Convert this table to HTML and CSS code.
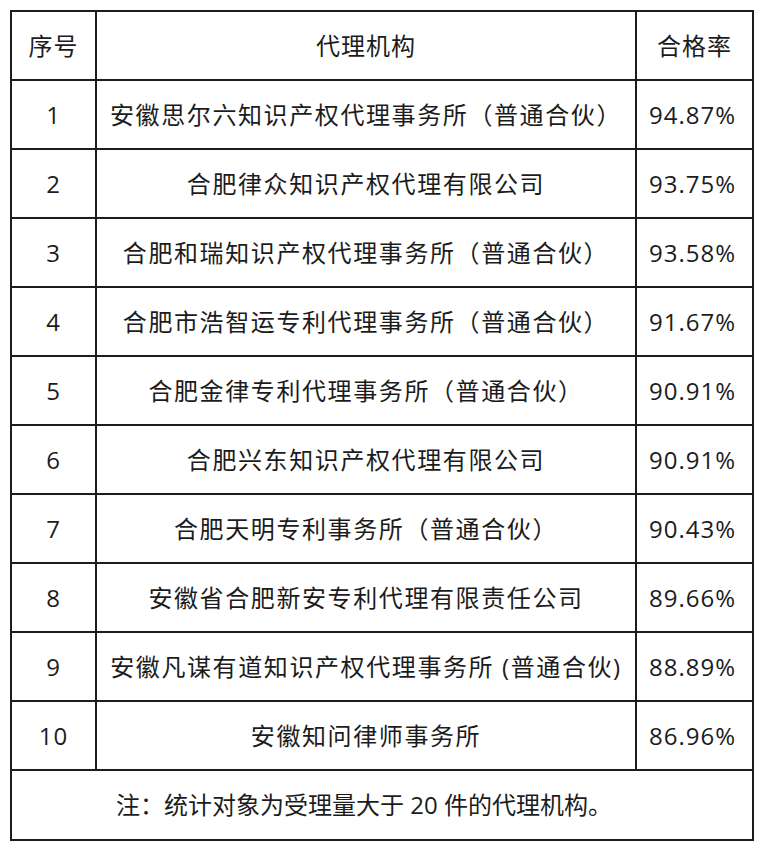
FILE: index.html
```html
<!DOCTYPE html>
<html lang="zh-CN">
<head>
<meta charset="utf-8">
<link rel="stylesheet" href="styles.css">
</head>
<body>
<table class="rank">
  <colgroup>
    <col class="c-no">
    <col class="c-name">
    <col class="c-rate">
  </colgroup>
  <thead>
    <tr><th>序号</th><th>代理机构</th><th>合格率</th></tr>
  </thead>
  <tbody>
    <tr><td>1</td><td class="name">安徽思尔六知识产权代理事务所（普通合伙）</td><td class="rate">94.87%</td></tr>
    <tr><td>2</td><td class="name">合肥律众知识产权代理有限公司</td><td class="rate">93.75%</td></tr>
    <tr><td>3</td><td class="name">合肥和瑞知识产权代理事务所（普通合伙）</td><td class="rate">93.58%</td></tr>
    <tr><td>4</td><td class="name">合肥市浩智运专利代理事务所（普通合伙）</td><td class="rate">91.67%</td></tr>
    <tr><td>5</td><td class="name">合肥金律专利代理事务所（普通合伙）</td><td class="rate">90.91%</td></tr>
    <tr><td>6</td><td class="name">合肥兴东知识产权代理有限公司</td><td class="rate">90.91%</td></tr>
    <tr><td>7</td><td class="name">合肥天明专利事务所（普通合伙）</td><td class="rate">90.43%</td></tr>
    <tr><td>8</td><td class="name">安徽省合肥新安专利代理有限责任公司</td><td class="rate">89.66%</td></tr>
    <tr><td>9</td><td class="name">安徽凡谋有道知识产权代理事务所 (普通合伙)</td><td class="rate">88.89%</td></tr>
    <tr><td>10</td><td class="name">安徽知问律师事务所</td><td class="rate">86.96%</td></tr>
  </tbody>
  <tfoot>
    <tr><td colspan="3" class="note">注：统计对象为受理量大于 20 件的代理机构。</td></tr>
  </tfoot>
</table>
</body>
</html>
```
FILE: styles.css
```css
html, body {
  margin: 0;
  padding: 0;
  background: #ffffff;
}
body {
  padding: 10px 0 0 10px;
  font-family: "Open Sans", "Noto Sans CJK SC", sans-serif;
  color: #1c1c1c;
}
.rank {
  border-collapse: collapse;
  table-layout: fixed;
  width: 742px;
  border: 2px solid #1c1c1c;
}
.c-no { width: 85px; }
.c-name { width: 540px; }
.c-rate { width: 117px; }
.rank th,
.rank td {
  border: 2px solid #1c1c1c;
  height: 67px;
  padding: 0;
  text-align: center;
  vertical-align: middle;
  font-size: 24px;
  font-weight: 400;
  letter-spacing: 1px;
  line-height: 1;
  white-space: nowrap;
}
.rank td.name {
  letter-spacing: 1.6px;
}
.rank td.rate {
  letter-spacing: 1px;
  padding-right: 4px;
}
.rank tfoot td.note {
  height: 68px;
  text-align: left;
  padding-left: 104px;
  letter-spacing: 0;
}
```
